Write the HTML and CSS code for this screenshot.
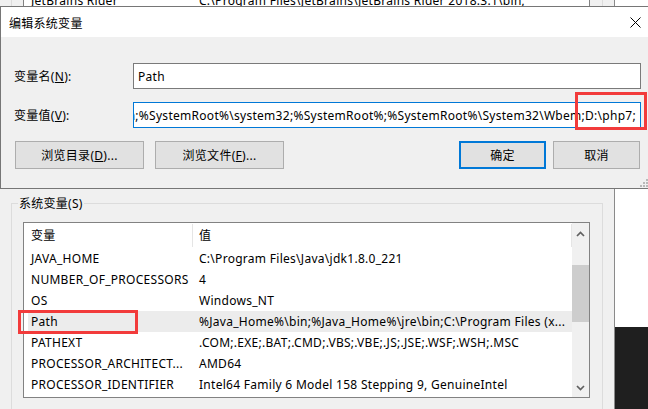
FILE: index.html
```html
<!DOCTYPE html>
<html lang="zh-CN">
<head>
<meta charset="utf-8">
<title>编辑系统变量</title>
<link rel="stylesheet" href="styles.css">
</head>
<body>
<div class="desk">
  <div class="parent">
    <div class="upper">
      <div class="upper-group">
        <div class="upper-list">
          <div class="row upper-row"><span class="c1 c1-up">JetBrains Rider</span><span class="c2">C:\Program Files\JetBrains\JetBrains Rider 2018.3.1\bin;</span></div>
        </div>
      </div>
    </div>
    <div class="group">
      <div class="group-title">系统变量(S)</div>
      <div class="list">
        <div class="list-main">
          <div class="list-head"><span class="c1">变量</span><span class="c2">值</span></div>
          <div class="row"><span class="c1">JAVA_HOME</span><span class="c2">C:\Program Files\Java\jdk1.8.0_221</span></div>
          <div class="row"><span class="c1">NUMBER_OF_PROCESSORS</span><span class="c2">4</span></div>
          <div class="row"><span class="c1">OS</span><span class="c2">Windows_NT</span></div>
          <div class="row sel"><span class="c1">Path</span><span class="c2">%Java_Home%\bin;%Java_Home%\jre\bin;C:\Program Files (x...</span></div>
          <div class="row"><span class="c1">PATHEXT</span><span class="c2">.COM;.EXE;.BAT;.CMD;.VBS;.VBE;.JS;.JSE;.WSF;.WSH;.MSC</span></div>
          <div class="row"><span class="c1">PROCESSOR_ARCHITECT...</span><span class="c2">AMD64</span></div>
          <div class="row"><span class="c1">PROCESSOR_IDENTIFIER</span><span class="c2">Intel64 Family 6 Model 158 Stepping 9, GenuineIntel</span></div>
        </div>
        <div class="scrollbar">
          <div class="sb-btn sb-up"><svg width="9" height="6" viewBox="0 0 9 6"><polyline points="1,5 4.5,1.5 8,5" fill="none" stroke="#606060" stroke-width="1.7"/></svg></div>
          <div class="sb-track"><div class="sb-thumb"></div></div>
          <div class="sb-btn sb-down"><svg width="9" height="6" viewBox="0 0 9 6"><polyline points="1,1 4.5,4.5 8,1" fill="none" stroke="#606060" stroke-width="1.7"/></svg></div>
        </div>
      </div>
    </div>
  </div>
  <div class="side"><div class="side-white"></div><div class="side-dark"></div></div>
</div>

<div class="dialog">
  <div class="titlebar">
    <span class="title">编辑系统变量</span>
    <span class="close"><svg width="11" height="11" viewBox="0 0 11 11"><path d="M0.5 0.5 L10.5 10.5 M10.5 0.5 L0.5 10.5" stroke="#000" stroke-width="1" fill="none"/></svg></span>
  </div>
  <div class="content">
    <div class="field">
      <span class="label">变量名(<u>N</u>):</span>
      <div class="input"><span class="input-text">Path</span></div>
    </div>
    <div class="field">
      <span class="label">变量值(<u>V</u>):</span>
      <div class="input focused"><span class="input-text">h;%SystemRoot%\system32;%SystemRoot%;%SystemRoot%\System32\Wbem;D:\php7;</span></div>
    </div>
    <div class="buttons">
      <div class="btn-group left">
        <span class="btn wide">浏览目录(<u>D</u>)...</span>
        <span class="btn wide">浏览文件(<u>F</u>)...</span>
      </div>
      <div class="btn-group right">
        <span class="btn default">确定</span>
        <span class="btn">取消</span>
      </div>
    </div>
  </div>
</div>

<svg class="grip" width="8" height="8" viewBox="0 0 8 8"><g fill="#b9b9b9"><rect x="6" y="0" width="2" height="2"/><rect x="3" y="3" width="2" height="2"/><rect x="6" y="3" width="2" height="2"/><rect x="0" y="6" width="2" height="2"/><rect x="3" y="6" width="2" height="2"/><rect x="6" y="6" width="2" height="2"/></g></svg>

<div class="mark mark-value"></div>
<div class="mark mark-path"></div>
</body>
</html>
```

FILE: styles.css
```css
* { box-sizing: border-box; }

html, body {
  margin: 0;
  padding: 0;
}

body {
  width: 648px;
  height: 409px;
  overflow: hidden;
  position: relative;
  font-family: "Noto Sans", "Noto Sans CJK SC", sans-serif;
  font-size: 12px;
  letter-spacing: 0.28px;
  color: #000;
  background: #f0f0f0;
}

u { text-decoration: underline; text-underline-offset: 1px; }

/* ---------- parent window ---------- */
.desk {
  display: flex;
  height: 409px;
}

.parent {
  width: 615px;
  height: 409px;
  background: #f0f0f0;
  border-right: 1px solid #8a8a8a;
  display: flex;
  flex-direction: column;
}

.upper {
  height: 188px;
  flex: none;
}

.upper-group {
  margin-left: 11px;
  width: 592px;
  height: 100%;
  border-left: 1px solid #dcdcdc;
  border-right: 1px solid #dcdcdc;
}

.upper-list {
  margin-left: 11px;
  width: 567px;
  height: 100%;
  border-left: 1px solid #828282;
  border-right: 1px solid #828282;
  background: #fff;
  overflow: hidden;
}

.upper-row { margin-top: -10px; }
.c1-up { padding-left: 9px; }

.group {
  margin: 15px 0 0 11px;
  width: 592px;
  flex: 1;
  border: 1px solid #dcdcdc;
  border-bottom: 0;
}

.group-title {
  width: max-content;
  height: 16px;
  margin: -8px 0 0 6px;
  padding: 0 1px;
  line-height: 16px;
  background: #f0f0f0;
}

.list {
  margin: 10px 0 0 11px;
  width: 567px;
  height: 176px;
  border: 1px solid #828282;
  background: #fff;
  display: flex;
}

.list-main {
  width: 548px;
  display: flex;
  flex-direction: column;
}

.list-head {
  display: flex;
  height: 25px;
  align-items: center;
}

.list-head .c1 {
  border-right: 1px solid #e5e5e5;
  height: 23px;
  line-height: 23px;
}

.list-head .c2 {
  flex: 1;
  height: 23px;
  line-height: 23px;
  border-right: 1px solid #e5e5e5;
}

.row {
  display: flex;
  height: 21px;
  align-items: center;
  white-space: nowrap;
}

.row.sel {
  background: linear-gradient(to right, transparent 4px, #ececec 4px);
}

.c1 {
  width: 169px;
  flex: none;
  padding-left: 7px;
  overflow: hidden;
  white-space: nowrap;
}

.c2 {
  padding-left: 6px;
  white-space: nowrap;
}

.scrollbar {
  width: 17px;
  margin-left: auto;
  background: #f0f0f0;
  display: flex;
  flex-direction: column;
}

.sb-btn {
  height: 21px;
  display: flex;
  justify-content: center;
  align-items: center;
}

.sb-up { padding-top: 1px; }
.sb-down { padding-top: 3px; }

.sb-track {
  flex: 1;
}

.sb-thumb {
  margin: 21px 0 0 0;
  height: 57px;
  background: #cdcdcd;
}

.side {
  flex: 1;
  display: flex;
  flex-direction: column;
}

.side-white { height: 327px; background: #fff; }
.side-dark { flex: 1; background: #1f1f1f; }

/* ---------- dialog window ---------- */
.dialog {
  position: absolute;
  left: 0;
  top: 6px;
  width: 660px;
  height: 183px;
  border: 1px solid #767676;
  background: #f0f0f0;
  display: flex;
  flex-direction: column;
}

.titlebar {
  height: 30px;
  background: #fff;
  display: flex;
  align-items: center;
  justify-content: space-between;
  padding-left: 8px;
}

.title {
  padding-top: 2px;
}

.close {
  width: 46px;
  height: 30px;
  display: flex;
  justify-content: center;
  align-items: center;
  padding-right: 1px;
}

.content {
  padding: 26px 0 0 13px;
  flex: 1;
}

.field {
  display: grid;
  grid-template-columns: 119px 508px;
  align-items: center;
  height: 26px;
  margin-bottom: 13px;
}

.label { white-space: nowrap; }

.input {
  height: 26px;
  border: 1px solid #7a7a7a;
  background: #fff;
  padding: 0 4px;
  display: flex;
  align-items: center;
  overflow: hidden;
  white-space: nowrap;
}

.input.focused {
  border-color: #0078d7;
  justify-content: flex-end;
  padding: 0 4px 0 0;
}

.buttons {
  margin: 3px 0 0 1px;
  width: 625px;
  display: flex;
  justify-content: space-between;
}

.btn-group { display: flex; }
.btn-group.left { gap: 11px; }
.btn-group.right { gap: 7px; }

.btn {
  height: 28px;
  width: 87px;
  border: 1px solid #adadad;
  background: #e1e1e1;
  display: flex;
  justify-content: center;
  align-items: center;
  white-space: nowrap;
}

.btn.wide { width: 129px; }

.btn.default {
  border: 2px solid #0078d7;
}

/* ---------- overlays ---------- */
.grip {
  position: absolute;
  left: 640px;
  top: 179px;
}

.mark {
  position: absolute;
  border: 3px solid #f23b3b;
}

.mark-value {
  left: 575px;
  top: 92px;
  width: 72px;
  height: 38px;
}

.mark-path {
  left: 18px;
  top: 310px;
  width: 120px;
  height: 24px;
}
```
